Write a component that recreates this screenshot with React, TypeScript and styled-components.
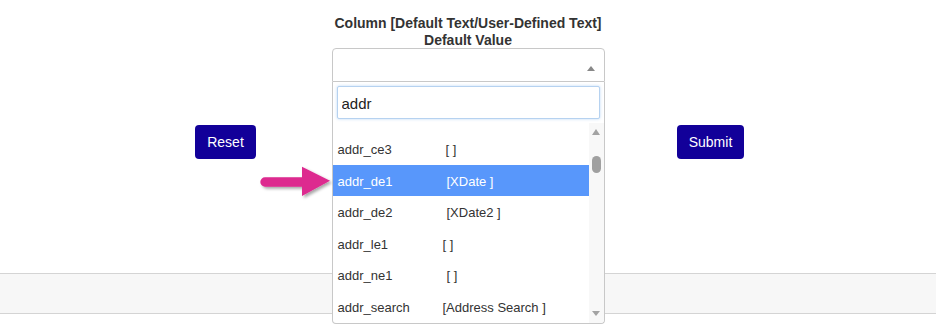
import React from "react";
import styled, { createGlobalStyle } from "styled-components";

const GlobalStyle = createGlobalStyle`
  html, body { margin: 0; padding: 0; background: #ffffff; }
  body { font-family: "Liberation Sans", Arial, sans-serif; color: #333333; }
  * { box-sizing: border-box; }
`;

const Page = styled.div`
  position: relative;
  width: 936px;
  height: 334px;
  overflow: hidden;
  background: #ffffff;
`;

const FormArea = styled.div`
  height: 273px;
  display: flex;
  justify-content: center;
  align-items: flex-start;
  gap: 36px;
`;

const ButtonCell = styled.div`
  width: 140px;
  padding-top: 125px;
  display: flex;
  justify-content: center;
`;

const ActionButton = styled.button`
  height: 34px;
  padding: 0 12px;
  border: none;
  border-radius: 4px;
  background: #120099;
  color: #ffffff;
  font-family: "Liberation Sans", Arial, sans-serif;
  font-size: 14px;
  cursor: pointer;
`;

const Field = styled.div`
  width: 273px;
  padding-top: 15px;
  display: flex;
  flex-direction: column;
`;

const Title = styled.div`
  font-size: 14px;
  font-weight: bold;
  line-height: 17px;
  text-align: center;
  color: #333333;
  height: 33px;
`;

const SelectWrap = styled.div`
  position: relative;
`;

const SelectBox = styled.div`
  height: 34px;
  border: 1px solid #c8c8c8;
  border-radius: 4px 4px 0 0;
  background: #ffffff;
  display: flex;
  align-items: center;
  justify-content: flex-end;
  padding: 6px 9px 0 0;
`;

const Caret = styled.span`
  width: 0;
  height: 0;
  border-left: 4px solid transparent;
  border-right: 4px solid transparent;
  border-bottom: 5px solid #888888;
`;

const Dropdown = styled.div`
  position: absolute;
  top: 100%;
  left: 0;
  right: 0;
  background: #ffffff;
  border: 1px solid #c8c8c8;
  border-top: none;
  border-radius: 0 0 4px 4px;
  z-index: 2;
`;

const SearchRow = styled.div`
  padding: 4px;
`;

const SearchInput = styled.input`
  display: block;
  width: 100%;
  height: 33px;
  padding: 2px 4px 0 4px;
  border: 1px solid #b6d2f0;
  border-radius: 2px;
  box-shadow: 0 0 3px rgba(102, 165, 233, 0.45);
  font-family: "Liberation Sans", Arial, sans-serif;
  font-size: 15px;
  color: #222222;
  outline: none;
  background: #ffffff;
`;

const Results = styled.div`
  height: 200px;
  display: flex;
`;

const List = styled.ul`
  flex: 1;
  margin: 0;
  padding: 10px 0 0 0;
  list-style: none;
  overflow: hidden;
`;

const Row = styled.li<{ $active?: boolean }>`
  height: 31.5px;
  display: flex;
  align-items: center;
  padding: 2px 0 0 5px;
  font-size: 13px;
  white-space: pre;
  background: ${(p) => (p.$active ? "#5897fb" : "transparent")};
  color: ${(p) => (p.$active ? "#ffffff" : "#333333")};
`;

const Name = styled.span`
  display: inline-block;
  width: 105px;
`;

const Value = styled.span<{ $shift: number }>`
  padding-left: ${(p) => p.$shift}px;
`;

const ScrollBar = styled.div`
  width: 15px;
  background: #f8f8f8;
  display: flex;
  flex-direction: column;
  align-items: center;
  padding: 6px 0 7px 0;
  border-bottom-right-radius: 4px;
`;

const ArrowUp = styled.span`
  width: 0;
  height: 0;
  border-left: 4px solid transparent;
  border-right: 4px solid transparent;
  border-bottom: 6px solid #a3a3a3;
`;

const ArrowDown = styled.span`
  width: 0;
  height: 0;
  border-left: 4px solid transparent;
  border-right: 4px solid transparent;
  border-top: 5px solid #a3a3a3;
`;

const Thumb = styled.span<{ $top: number }>`
  width: 9px;
  height: 17px;
  margin-top: ${(p) => p.$top}px;
  border-radius: 5px;
  background: #a0a0a0;
`;

const Spacer = styled.span`
  flex: 1;
`;

const Band = styled.div`
  height: 41px;
  background: #f7f7f7;
  border-top: 1px solid #d4d4d4;
  border-bottom: 1px solid #d4d4d4;
`;

const Pointer = styled.svg`
  position: absolute;
  left: 256px;
  top: 160px;
  overflow: visible;
  z-index: 3;
`;

const rows = [
  { name: "addr_ce3", value: "[ ]", shift: 3 },
  { name: "addr_de1", value: "[XDate ]", shift: 4, active: true },
  { name: "addr_de2", value: "[XDate2 ]", shift: 4 },
  { name: "addr_le1", value: "[ ]", shift: 0 },
  { name: "addr_ne1", value: "[ ]", shift: 4 },
  { name: "addr_search", value: "[Address Search ]", shift: 0 },
];

export default function App() {
  return (
    <>
      <GlobalStyle />
      <Page>
        <FormArea>
          <ButtonCell>
            <ActionButton>Reset</ActionButton>
          </ButtonCell>
          <Field>
            <Title>
              Column [Default Text/User-Defined Text]
              <br />
              Default Value
            </Title>
            <SelectWrap>
              <SelectBox>
                <Caret />
              </SelectBox>
              <Dropdown>
                <SearchRow>
                  <SearchInput value="addr" readOnly />
                </SearchRow>
                <Results>
                  <List>
                    {rows.map((r) => (
                      <Row key={r.name} $active={r.active}>
                        <Name>{r.name}</Name>
                        <Value $shift={r.shift}>{r.value}</Value>
                      </Row>
                    ))}
                  </List>
                  <ScrollBar>
                    <ArrowUp />
                    <Thumb $top={21} />
                    <Spacer />
                    <ArrowDown />
                  </ScrollBar>
                </Results>
              </Dropdown>
            </SelectWrap>
          </Field>
          <ButtonCell>
            <ActionButton>Submit</ActionButton>
          </ButtonCell>
        </FormArea>
        <Band />
        <Pointer width="80" height="44" viewBox="0 0 80 44">
          <defs>
            <filter id="pshadow" x="-20%" y="-30%" width="150%" height="180%">
              <feDropShadow dx="2" dy="2" stdDeviation="1.6" floodColor="#000" floodOpacity="0.35" />
            </filter>
          </defs>
          <g filter="url(#pshadow)" fill="#dd2a8f">
            <path d="M9 17.3 H47 V26.7 H9 A4.7 4.7 0 0 1 9 17.3 Z" />
            <path d="M46 6.7 L74 20.7 L46 36 Z" />
          </g>
        </Pointer>
      </Page>
    </>
  );
}
